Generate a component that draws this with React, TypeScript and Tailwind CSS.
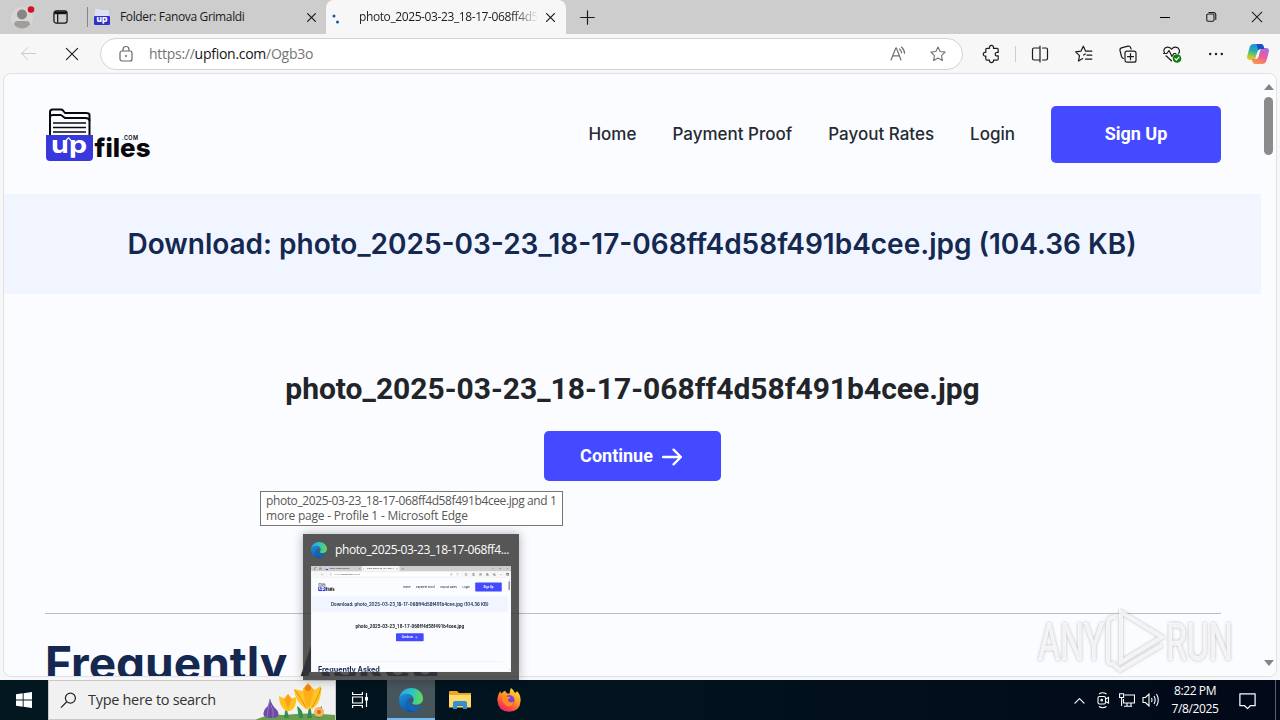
import React from "react";

type SvgProps = { className?: string };

function Line({ d, className = "h-5 w-5", sw = 1.2 }: { d: string; className?: string; sw?: number }) {
  return (
    <svg viewBox="0 0 20 20" className={"shrink-0 " + className} fill="none" stroke="currentColor" strokeWidth={sw} strokeLinecap="round" strokeLinejoin="round">
      <path d={d} />
    </svg>
  );
}

function UpfilesIcon({ className }: SvgProps) {
  return (
    <svg viewBox="0 0 16 18" className={className}>
      <path d="M1 10V2q0-1 1-1h4l1 1h7q1 0 1 1v7z" fill="#dfe0f3" />
      <rect x="0" y="8" width="16" height="9" rx="1.3" fill="#2f31c8" />
      <text x="8" y="14.3" textAnchor="middle" fontFamily="Inter, sans-serif" fontWeight="800" fontSize="8.6" fill="#fff">up</text>
    </svg>
  );
}

function UpfilesLogo({ className }: SvgProps) {
  return (
    <svg viewBox="0 0 110 56" className={className}>
      <g fill="none" stroke="#08080c" strokeWidth="2" strokeLinejoin="round">
        <path d="M5 29V6q0-2.500 2.500-2.500H16q1 0 2 1l2 2.500h21q3.500 0 3.500 2V29" />
        <path d="M5 11q0-2 3-2h8l4 3h20q4.500 0 4.500 3" />
        <path d="M8 17h33M8 21.500h33M8 26h33" strokeWidth="1.500" />
      </g>
      <path d="M1 29h47v22q0 4-4 4H5q-4 0-4-4z" fill="#3838dc" />
      <text x="6" y="47" fontFamily="Inter, sans-serif" fontWeight="700" fontSize="24" fill="#fff" textLength="36" lengthAdjust="spacingAndGlyphs">up</text>
      <path d="M23.500 50V34" fill="none" stroke="#3838dc" strokeWidth="1.800" />
      <path d="M20.500 35l3-3.200 3 3.200" fill="none" stroke="#fff" strokeWidth="1.100" />
      <text x="49.500" y="51" fontFamily="Inter, sans-serif" fontWeight="800" fontSize="26" fill="#08080c" textLength="56" lengthAdjust="spacingAndGlyphs">files</text>
      <text x="77" y="34" fontFamily="Inter, sans-serif" fontWeight="600" fontSize="5.500" fill="#08080c" textLength="16" lengthAdjust="spacing">.COM</text>
    </svg>
  );
}

function EdgeIcon({ className }: SvgProps) {
  return (
    <svg viewBox="0 0 24 24" className={"shrink-0 " + className}>
      <defs>
        <linearGradient id="edgeTop" x1="0" y1=".4" x2="1" y2=".5">
          <stop offset="0" stopColor="#2aa7e6" />
          <stop offset=".5" stopColor="#2dc4c4" />
          <stop offset="1" stopColor="#62da55" />
        </linearGradient>
        <linearGradient id="edgeLow" x1="0" y1="0" x2=".6" y2="1">
          <stop offset="0" stopColor="#1c93de" />
          <stop offset="1" stopColor="#0d55a8" />
        </linearGradient>
      </defs>
      <path d="M.2 11C.8 4.500 6 .1 12 .1c7 0 12 4.900 12 10.400 0 4-3.100 6.200-6.500 6.200-2.800 0-4.200-.8-4.200-1.700 0-.7 1.300-1.200 1.300-3.200C14.600 8.600 11.500 6 7.800 6 4.300 6 1.500 7.800.2 11z" fill="url(#edgeTop)" />
      <path d="M.1 12.500C.1 8.500 3.500 5.800 7.800 5.800c3.800 0 6.800 2.600 6.800 5.600-.8-1-2-1.500-3-1.400-2.600.3-3.600 2.700-3.300 5 .5 4.500 4.500 8 8.600 7.500-1.500.9-3.200 1.400-5 1.400C5.200 24 .1 18.500.1 12.500z" fill="url(#edgeLow)" />
      <path d="M10 10.500c-3 1.500-3.500 5.500-2 8.500 2 4 6.500 5 9.500 3.400 2.500-1.300 4.200-3 5-4.600.3-.6-.1-.9-.7-.6-5 2.300-12 .6-11.800-6.700z" fill="#1264b4" />
    </svg>
  );
}

function CopilotIcon() {
  return (
    <svg viewBox="0 0 24 24" className="h-[24px] w-[24px]">
      <defs>
        <linearGradient id="cpL" x1=".5" y1="0" x2=".3" y2="1">
          <stop offset="0" stopColor="#1a8fe8" />
          <stop offset=".45" stopColor="#28b0b0" />
          <stop offset=".75" stopColor="#9fca3c" />
          <stop offset="1" stopColor="#f7c02c" />
        </linearGradient>
        <linearGradient id="cpR" x1=".7" y1="0" x2=".3" y2="1">
          <stop offset="0" stopColor="#a96be8" />
          <stop offset=".5" stopColor="#ee5a9a" />
          <stop offset="1" stopColor="#fb9a4b" />
        </linearGradient>
      </defs>
      <path d="M8 2h7c1.500 0 2.200 1 2.600 2.400L18.400 7H15c-2 0-3 1-3.600 3l-1.700 5.500C9.200 17.500 8 18 6 18H4c-2.500 0-3.400-1.500-2.800-4l2.500-9C4.300 3 5.500 2 8 2z" fill="url(#cpL)" />
      <path d="M16 22H9c-1.500 0-2.200-1-2.600-2.400L5.600 17H9c2 0 3-1 3.600-3l1.700-5.500C14.800 6.500 16 6 18 6h2c2.500 0 3.400 1.500 2.800 4l-2.500 9c-.6 2-1.800 3-4.300 3z" fill="url(#cpR)" />
      <path d="M10.500 2H15c1.500 0 2.200 1 2.600 2.400L18.400 7H15c-1.300 0-2.200.4-2.800 1.300z" fill="#1c4fc4" />
      <path d="M10.700 12.500h2.300l-1 3c-.5 1.400-1.300 1.500-2.300 1.500z" fill="#f7f7f7" />
    </svg>
  );
}

function HeartIcon() {
  return (
    <svg viewBox="0 0 20 20" className="h-5 w-5" fill="none" stroke="#1c1c1c" strokeWidth="1.200" strokeLinejoin="round" strokeLinecap="round">
      <path d="M2.600 9.200C.8 6.500 2.200 3.300 5.500 3.100 7.500 3 8.900 4 9.600 5.300 10.400 4 11.800 3 13.700 3.100c3.400.2 4.800 3.800 3 6.400" />
      <path d="M1.500 9.500h3.300L7 6.500l3 6 1.800-3h2" />
      <path d="M4 11.800l5.500 5" />
      <circle cx="15" cy="14.500" r="4.300" fill="#107c10" stroke="none" />
      <path d="M13 14.600l1.400 1.400 2.600-2.900" stroke="#fff" />
    </svg>
  );
}

function Puzzle() {
  return <Line d="M7.500 4.300c-.3-2 .7-3 2-3s2.300 1 2 3H15q1.200 0 1.200 1.200v3c-1.900-.3-3 .4-3 1.700s1.100 2 3 1.700V15q0 1.200-1.200 1.200h-3.500c.3 1.600-.8 2.400-2 2.400s-2.300-.8-2-2.400H5q-1.200 0-1.200-1.200v-3C2 12.300 1.300 11.400 1.300 10.200S2.100 8 3.800 8.300V5.500Q3.800 4.300 5 4.300z" />;
}

function TitleBar() {
  return (
    <div className="flex h-[34px] shrink-0 bg-[#cdcdcd] text-[#1b1b1b]">
      <div className="flex w-11 items-center justify-center">
        <svg viewBox="0 0 26 26" className="h-[26px] w-[26px]">
          <circle cx="13" cy="14" r="11" fill="#d8d6d4" />
          <circle cx="13" cy="10.500" r="5" fill="#888684" />
          <path d="M5 20.500q0-3.500 3.500-3.500h9q3.500 0 3.500 3.500-3 4-8 4t-8-4z" fill="#a09d9b" />
          <circle cx="22" cy="5.500" r="3.300" fill="#d7101f" />
        </svg>
      </div>
      <div className="flex w-[43px] items-center pl-[9px]">
        <svg viewBox="0 0 16 16" className="h-4 w-[15px]" fill="none" stroke="#111" strokeWidth="1.300">
          <rect x="1" y="1.500" width="14" height="13" rx="2.500" />
          <path d="M1.500 3.500h13" strokeWidth="3" />
          <path d="M5 4v10" strokeWidth="1.300" />
        </svg>
      </div>
      <div className="mt-[7px] h-5 w-px bg-[#858585]" />
      <div className="flex w-[238px] items-center pr-1">
        <UpfilesIcon className="ml-1.5 h-[18px] w-4" />
        <span className="ml-2.5 flex-1 whitespace-nowrap text-[12px] leading-4 tracking-[-0.36px]">Folder: Fanova Grimaldi</span>
        <Line d="M4 4l12 12M16 4L4 16" sw={1.9} className="mr-1 h-[13px] w-[13px]" />
      </div>
      <div className="flex h-[34px] w-[240px] items-center rounded-t-lg bg-[#f7f7f7]">
        <svg viewBox="0 0 16 16" className="ml-[5px] h-4 w-4">
          <circle cx="3" cy="7" r="1.500" fill="#155a9c" />
          <circle cx="6.500" cy="13" r="1.500" fill="#155a9c" />
        </svg>
        <span className="ml-[12px] w-[179px] overflow-hidden whitespace-nowrap bg-gradient-to-r from-[#1b1b1b] from-85% to-[#f7f7f7] bg-clip-text text-[12px] leading-4 tracking-[-0.4px] text-transparent">photo_2025-03-23_18-17-068ff4d58f491b4cee.jpg</span>
        <Line d="M4 4l12 12M16 4L4 16" sw={1.9} className="ml-1.5 h-[13px] w-[13px]" />
      </div>
      <div className="flex flex-1 items-center pl-[14px]">
        <Line d="M10 1v18M1 10h18" sw={1.6} className="h-[15px] w-[15px]" />
      </div>
      <div className="flex w-[138px]">
        <div className="flex w-[46px] items-center justify-center pr-px"><div className="h-px w-2.5 bg-black" /></div>
        <div className="flex w-[46px] items-center justify-center">
          <Line d="M3 7q0-2 2-2h8q2 0 2 2v8q0 2-2 2H5q-2 0-2-2zM6.500 2.500H14q4 0 4 4V14" sw={1.8} className="h-3 w-3" />
        </div>
        <div className="flex w-[46px] items-center justify-center"><Line d="M2 2l16 16M18 2L2 18" sw={1.7} className="h-3 w-3" /></div>
      </div>
    </div>
  );
}

function Toolbar() {
  return (
    <div className="flex h-[39px] shrink-0 items-center bg-[#f7f7f7] text-[#1c1c1c]">
      <div className="ml-[17px] flex w-[22px] justify-center text-[#c6c6c6]"><Line d="M18 10H2M9 3l-7 7 7 7" sw={1.1} className="h-[17px] w-[17px]" /></div>
      <div className="ml-[22px] mr-[17px] flex w-[22px] justify-center"><Line d="M3 3l14 14M17 3L3 17" sw={1.4} className="h-4 w-4" /></div>
      <div className="flex h-8 w-[863px] items-center rounded-full border border-[#d3d3d3] bg-white text-[#707070]">
        <svg viewBox="0 0 16 18" className="ml-[17px] h-[18px] w-4" fill="none" stroke="#686868" strokeWidth="1.200">
          <rect x="2" y="6" width="12" height="10" rx="2" />
          <path d="M5 6V4.500q0-3 3-3t3 3V6" />
          <circle cx="8" cy="11" r="1" fill="#686868" stroke="none" />
        </svg>
        <span className="ml-[15px] flex-1 whitespace-nowrap text-[14px] leading-5 tracking-[-0.27px] text-[#757575]">https://<span className="text-[#151515]">upfion.com</span>/Ogb3o</span>
        <svg viewBox="0 0 18 18" className="mr-[22px] h-[18px] w-[18px]" fill="none" stroke="#6d6d6d" strokeWidth="1.200" strokeLinecap="round">
          <path d="M2 15L6.800 3h.6L12 15M3.700 10.800h6.700M10.500 4q2 1.500 2 3.800M12.500 2.200q3 2.400 3 6" />
        </svg>
        <Line d="M10 2.200l2.400 5 5.500.7-4 3.800 1 5.500L10 14.500l-4.900 2.700 1-5.500-4-3.800 5.500-.7z" className="mr-[15px] h-[18px] w-[18px]" />
      </div>
      <div className="ml-[7px] flex w-11 justify-center"><Puzzle /></div>
      <div className="ml-px mr-[2px] h-4 w-px bg-[#cfcfcf]" />
      <div className="flex w-11 justify-center"><Line d="M7.500 4H4Q2.500 4 2.500 5.500v9Q2.500 16 4 16h3.500M12.500 4H16q1.500 0 1.500 1.500v9q0 1.500-1.500 1.500h-3.500M10 2v16M7.500 4H10M10 16H7.500" /></div>
      <div className="flex w-11 justify-center"><Line d="M12 7.200H17.800M13 11.200h4.800M11.500 15.200h6.300M13 7.200h-1.300L9.300 2.200 6.900 7.200l-5.300.7 3.900 3.700-1 5.400 4.200-2.400M9.600 11l1.700-1" /></div>
      <div className="flex w-11 justify-center"><Line d="M9 7.200h7q2 0 2 2v7q0 2-2 2H9q-2 0-2-2v-7q0-2 2-2zM12.500 9.700v6M9.500 12.700h6M5.500 14.500Q4 14 3.500 12.500L2 6.500q-.4-2 1.500-2.600l6.500-1.700q2-.4 2.600 1.400l.5 1.500" /></div>
      <div className="flex w-11 justify-center"><HeartIcon /></div>
      <div className="flex w-11 justify-center"><svg viewBox="0 0 20 20" className="h-5 w-5" fill="#1c1c1c"><circle cx="4.200" cy="10" r="1.200" /><circle cx="10" cy="10" r="1.200" /><circle cx="15.800" cy="10" r="1.200" /></svg></div>
      <div className="flex w-10 justify-center"><CopilotIcon /></div>
    </div>
  );
}

function SitePage() {
  return (
    <div className="mx-[3px] mb-[3px] flex min-h-0 flex-1 overflow-hidden rounded-lg border border-[#dfe1e3] bg-[#fafcff]">
      <div className="flex min-w-0 flex-1 flex-col font-[Inter,sans-serif]">
        <header className="flex h-[120px] shrink-0 items-center pl-[41px] pr-10">
          <UpfilesLogo className="h-[56px] w-[110px]" />
          <nav className="ml-auto flex items-center gap-9 whitespace-nowrap text-[17px] font-medium text-[#252a33]">
            <span className="pt-0.5">Home</span>
            <span className="pt-0.5">Payment Proof</span>
            <span className="pt-0.5">Payout Rates</span>
            <span className="pt-0.5">Login</span>
            <button className="h-[57px] w-[170px] rounded-[5px] bg-[#444aff] pb-0.5 font-[Roboto,sans-serif] text-[18px] font-bold text-white">Sign Up</button>
          </nav>
        </header>
        <div className="flex h-[100px] shrink-0 items-center justify-center bg-[#f0f5ff] pr-px">
          <h1 className="whitespace-nowrap text-[28px] font-semibold text-[#142850]">Download: photo_2025-03-23_18-17-068ff4d58f491b4cee.jpg (104.36 KB)</h1>
        </div>
        <div className="flex h-[319px] shrink-0 flex-col items-center pt-[75px] font-[Roboto,sans-serif]">
          <h2 className="h-10 whitespace-nowrap text-[30px] font-bold leading-10 text-[#212529]">photo_2025-03-23_18-17-068ff4d58f491b4cee.jpg</h2>
          <button className="mt-[22px] flex h-[50px] w-[177px] items-center justify-center gap-[9px] rounded-[5px] bg-[#444aff] pr-0.5 text-[18px] font-bold text-white">
            <span className="pb-0.5">Continue</span>
            <Line d="M1 10.500h17M11 3.500l7 7-7 7" sw={2.2} className="h-[21px] w-[21px]" />
          </button>
        </div>
        <div className="ml-[41px] mr-10 h-px shrink-0 bg-[#bcbfc4]" />
        <h2 className="mt-5 whitespace-nowrap pl-[41px] text-[46px] font-bold leading-[58px] text-[#142850]">Frequently Asked</h2>
      </div>
      <div className="flex w-[15px] flex-col items-center bg-[#fafcff] py-2.5">
        <svg viewBox="0 0 10 6" className="h-1.5 w-2.5" fill="#858585"><path d="M0 6L5 0l5 6z" /></svg>
        <div className="mt-[7px] h-[58px] w-[9px] rounded-full bg-[#8b8b8b]" />
        <svg viewBox="0 0 10 6" className="mt-auto h-1.5 w-2.5" fill="#858585"><path d="M0 0h10L5 6z" /></svg>
      </div>
    </div>
  );
}

function BrowserWindow() {
  return (
    <div className="flex h-[680px] w-[1280px] flex-col overflow-hidden bg-[#f7f7f7] font-['Open_Sans','Noto_Sans',sans-serif]">
      <TitleBar />
      <Toolbar />
      <SitePage />
    </div>
  );
}

function Flowers() {
  return (
    <svg viewBox="0 0 80 40" className="h-10 w-20">
      <path d="M0 40q12-6 28-5 26-3 52 0v5z" fill="#6b9d51" />
      <path d="M29 38l2-12 3 12zM52 38l3-16 2 16zM44 38l-2-12q6 3 6 12zM62 38q-2-8 5-12 0 9-2 12z" fill="#2f8f4d" />
      <path d="M15 19q-1 7-5 10-5 9 6 9 11 0 6-8-5-4-7-11z" fill="#6c4aa5" />
      <path d="M15 19q-2 9-3 18M16 25q3 5 2 13" stroke="#9676c2" fill="none" />
      <path d="M24 16l6 3 3-5 3 5 5-2q1 11-6 14h-4q-7-5-7-15z" fill="#ffc21c" />
      <path d="M29 19l4-5 4 5-4 10z" fill="#ffa316" />
      <path d="M39 9l9 2 5-8 6 7 7-4q1 17-9 23h-6Q40 22 39 9z" fill="#ffc526" />
      <path d="M48 9l5-6 6 7-4 16h-4z" fill="#ffae18" />
      <circle cx="53" cy="8" r="3" fill="#f28115" />
      <path d="M40 10q6 8 11 18M66 8q-5 14-9 19" stroke="#e98c14" fill="none" />
      <circle cx="64" cy="32" r="5" fill="#f7b25b" />
      <circle cx="64" cy="32" r="2" fill="#d96c1c" />
    </svg>
  );
}

function Taskbar() {
  return (
    <div className="flex h-10 w-[1280px] bg-gradient-to-r from-[#02171f] via-[#02131f] to-[#020919] font-['Open_Sans','Noto_Sans',sans-serif] text-white">
      <div className="flex w-12 items-center justify-center">
        <svg viewBox="0 0 16 16" className="h-4 w-4" fill="#fff"><path d="M0 2.300L6.700 1.300v6.200H0zM7.600 1.200L16 0v7.500H7.600zM0 8.400h6.700v6.300L0 13.700zM7.600 8.400H16V16l-8.400-1.200z" /></svg>
      </div>
      <div className="flex w-[288px] items-center border border-[#c9c9c9] bg-[#f1f1f1] text-[#333]">
        <svg viewBox="0 0 18 18" className="ml-[11px] h-[17px] w-[17px]" fill="none" stroke="#222" strokeWidth="1.300"><circle cx="11" cy="6.500" r="5.300" /><path d="M7.200 10.300L1 16.500" /></svg>
        <span className="ml-[11px] flex-1 whitespace-nowrap text-[14.5px] leading-5 tracking-[-0.3px]">Type here to search</span>
        <Flowers />
      </div>
      <div className="flex w-[51px] items-center justify-center pr-[3px]">
        <svg viewBox="0 0 18 16" className="h-4 w-[18px]" fill="none" stroke="#fff" strokeWidth="1.200"><path d="M1.600 5h9.800v6H1.600zM1.600 0v2.500h9.800V0M1.600 16v-2.500h9.800V16M15.500 1v14" /><path d="M14 5h3v3.500h-3z" fill="#fff" stroke="none" /></svg>
      </div>
      <div className="flex w-12 flex-col items-center border-b-2 border-[#76b9f0] bg-[#47565d] pt-2"><EdgeIcon className="h-6 w-6" /></div>
      <div className="flex w-[49px] items-center justify-center">
        <svg viewBox="0 0 22 20" className="h-5 w-[22px]"><path d="M0 2q0-1 1-1h7l2 2h12v14H0z" fill="#e9a629" /><path d="M0 5h22v12.500H0z" fill="#ffd969" /><path d="M4 19v-6q0-2 2-2h10q2 0 2 2v6h-4v-4H8v4z" fill="#2f91d2" /><path d="M8 15.500h6" stroke="#3e75a5" /></svg>
      </div>
      <div className="flex w-[49px] items-center justify-center">
        <svg viewBox="0 0 24 24" className="h-6 w-6">
          <defs><linearGradient id="ff" x1=".8" y1="0" x2=".2" y2="1"><stop offset="0" stopColor="#ffe23c" /><stop offset=".45" stopColor="#ff9322" /><stop offset=".8" stopColor="#fa3b4b" /><stop offset="1" stopColor="#e12188" /></linearGradient></defs>
          <path d="M14 0q3 2 4 5 2-1 2-2 4 4 3.600 10Q23 23.500 12 23.700 1 23.300.4 12.500.3 7 3.500 3q0 2 1 2.500Q6.500 3 8.500 2.700q0 1.800 1.700 2.800 2 .1 2.500 0Q12.500 2.500 14 0z" fill="url(#ff)" />
          <circle cx="12.300" cy="12.300" r="5.200" fill="#7a43d6" />
          <path d="M4.500 8.500q3-2 6 .2h3q-.4 2-2.700 2.500 0 3 3 3 2-.2 3-1-1 5-5.500 5Q6 17.500 4.500 8.500z" fill="#ff8b21" />
        </svg>
      </div>
      <div className="flex-1" />
      <div className="flex w-6 items-center justify-center"><Line d="M3 14l7-7 7 7" sw={1.8} className="h-[13px] w-[13px]" /></div>
      <div className="flex w-6 items-center justify-center">
        <svg viewBox="0 0 16 18" className="h-[18px] w-4" fill="none" stroke="#fff" strokeWidth="1.100"><rect x="3" y="5.500" width="7.500" height="7.500" rx="1.500" /><circle cx="6.700" cy="9.200" r=".8" /><path d="M10.500 8l3-1.500v5.500l-3-1.500M4 3q3.500-2.500 7.500 0M4 15.500q3.500 2.500 7.500 0" /></svg>
      </div>
      <div className="flex w-6 items-center justify-center">
        <svg viewBox="0 0 16 14" className="h-3.5 w-4" fill="none" stroke="#fff" strokeWidth="1.100"><path d="M5.500 2h10v8h-11V6M8 10v3M12 10v3M5 13.300h8M.6.800h4v3.700h-4zM2.600 4.500V13" /></svg>
      </div>
      <div className="flex w-6 items-center justify-center">
        <svg viewBox="0 0 18 16" className="h-4 w-[18px]" fill="none" stroke="#fff" strokeWidth="1.100"><path d="M1 5.500h2.500L7 2v12l-3.500-3.500H1zM9.500 6q1 2 0 4M12 4q2.300 4 0 8M14.500 2q3.500 6 0 12" /></svg>
      </div>
      <div className="flex w-[64px] flex-col items-center justify-center whitespace-nowrap text-[12px] leading-[18px] tracking-[-0.4px]"><span>8:22 PM</span><span>7/8/2025</span></div>
      <div className="flex w-10 items-center justify-center"><Line d="M2 3h16v12.500h-5L10 18.500 7 15.500H2z" sw={1.3} className="h-[19px] w-[19px]" /></div>
      <div className="ml-2 w-[5px] border-l border-[#59616b]" />
    </div>
  );
}

function Watermark() {
  return (
    <svg viewBox="0 0 204 70" className="h-[70px] w-[204px] drop-shadow-[0_0_1.500px_rgba(100,100,110,0.55)]">
      <g fill="#fff" stroke="#fff" strokeWidth=".8" fillOpacity=".78" strokeOpacity=".6" fontFamily="Roboto, sans-serif" fontSize="52" fontWeight="400">
        <text x="3" y="57" textLength="66" lengthAdjust="spacingAndGlyphs">ANY</text>
        <text x="131" y="57" textLength="67" lengthAdjust="spacingAndGlyphs">RUN</text>
      </g>
      <g fill="none" stroke="#fff" strokeOpacity=".8" strokeWidth="4">
        <path d="M86 9l41 25-41 25z" />
        <path d="M80 14q-7 0-7 7v35q0 7 7 4M77 60l8 7 42-25" />
      </g>
    </svg>
  );
}

export default function App() {
  return (
    <div className="relative h-[720px] w-[1280px] overflow-hidden">
      <BrowserWindow />
      <div className="absolute left-[1035px] top-[603px]"><Watermark /></div>
      <div className="absolute left-[303px] top-[534px] h-[146px] w-[216px] bg-[rgba(54,54,54,0.84)] px-2 shadow-[0_0_10px_rgba(0,0,0,0.3)]">
        <div className="flex h-8 items-center font-['Open_Sans','Noto_Sans',sans-serif] text-[12px] text-white">
          <EdgeIcon className="h-4 w-4" />
          <span className="ml-2 whitespace-nowrap leading-4 tracking-[-0.4px]">photo_2025-03-23_18-17-068ff4...</span>
        </div>
        <div className="h-[106px] w-[200px] overflow-hidden bg-white">
          <div className="h-[680px] w-[1280px] origin-top-left scale-[0.15625]"><BrowserWindow /></div>
        </div>
      </div>
      <div className="absolute left-[260px] top-[491px] h-[35px] w-[303px] border border-[#767676] bg-white px-[5px] pt-px font-['Open_Sans','Noto_Sans',sans-serif] text-[12px] leading-[15px] text-[#575757]">
        <div className="whitespace-nowrap tracking-[-0.4px]">photo_2025-03-23_18-17-068ff4d58f491b4cee.jpg and 1</div>
        <div className="whitespace-nowrap tracking-[-0.22px]">more page - Profile 1 - Microsoft Edge</div>
      </div>
      <Taskbar />
    </div>
  );
}
